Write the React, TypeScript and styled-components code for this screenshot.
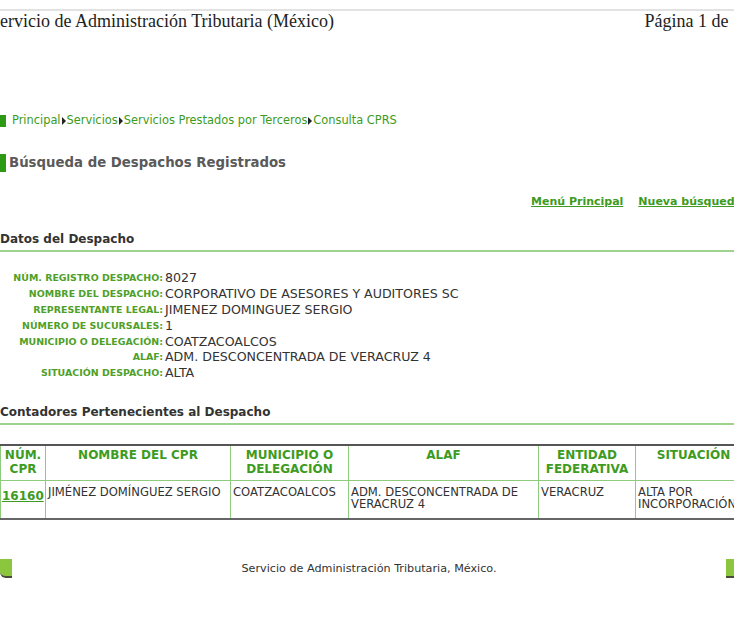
import React from "react";
import styled, { createGlobalStyle } from "styled-components";

const GlobalStyle = createGlobalStyle`
  html, body {
    margin: 0;
    padding: 0;
    background: #fff;
    overflow: hidden;
  }
  body {
    font-family: "DejaVu Sans", Verdana, sans-serif;
    color: #333;
  }
`;

const green = "#3d9b22";
const lightGreen = "#9dd38c";

const Page = styled.div`
  width: 752px;
  display: flex;
  flex-direction: column;
`;

const PrintHeader = styled.div`
  margin-top: 9px;
  border-top: 2px solid #e2e2e2;
  display: flex;
  justify-content: space-between;
  font-family: "Liberation Serif", "Times New Roman", serif;
  font-size: 18px;
  line-height: 21px;
  color: #222;
  margin-left: -10px;
  width: 752px;
`;

const Crumbs = styled.div`
  margin-top: 82px;
  display: flex;
  align-items: center;
  gap: 6px;
  font-size: 11.4px;
  line-height: 13px;
  color: ${green};
`;

const Marker = styled.span<{ $h: number }>`
  display: inline-block;
  flex: none;
  width: 6px;
  height: ${({ $h }) => $h}px;
  background: #2e9a14;
`;

const Arrow = styled.span`
  display: inline-block;
  width: 0;
  height: 0;
  border-top: 4px solid transparent;
  border-bottom: 4px solid transparent;
  border-left: 4px solid #222;
  margin: 0 1px;
`;

const CrumbText = styled.span`
  display: flex;
  align-items: center;
`;

const Title = styled.h1`
  margin: 27px 0 0;
  display: flex;
  align-items: center;
  gap: 3px;
  font-size: 13.3px;
  line-height: 18px;
  font-weight: bold;
  color: #5a5a5a;
`;

const Links = styled.div`
  margin: 23px 10px 0 0;
  display: flex;
  justify-content: flex-end;
  gap: 15px;
  font-size: 11px;
  line-height: 14px;
  font-weight: bold;
`;

const NavLink = styled.a`
  color: ${green};
  text-decoration: underline;
`;

const SectionTitle = styled.h2<{ $top: number }>`
  margin: ${({ $top }) => $top}px 0 0;
  font-size: 12px;
  line-height: 16px;
  font-weight: bold;
  color: #333;
  padding-bottom: 3px;
  border-bottom: 2px solid ${lightGreen};
`;

const Fields = styled.dl`
  margin: 18px 0 0;
  display: grid;
  grid-template-columns: 163px 1fr;
  grid-auto-rows: 15.8px;
  align-items: center;
`;

const Label = styled.dt`
  text-align: right;
  font-size: 9.45px;
  font-weight: bold;
  color: #4f9f2a;
  white-space: nowrap;
`;

const Value = styled.dd`
  margin: 0 0 0 2px;
  font-size: 12.6px;
  color: #333;
  white-space: nowrap;
`;

const Table = styled.table`
  margin-top: 19px;
  border-collapse: collapse;
  width: 752px;
  table-layout: fixed;
  border-top: 2px solid #555;
  border-bottom: 2px solid #666;
`;

const HeadRow = styled.tr`
  height: 36px;
`;

const BodyRow = styled.tr`
  height: 38px;
`;

const Th = styled.th`
  border: 1px solid #8fcb7c;
  border-top: none;
  font-size: 12px;
  font-weight: bold;
  color: ${green};
  line-height: 14px;
  vertical-align: top;
  padding: 2px 1px 0;
  text-align: center;
`;

const Td = styled.td`
  border: 1px solid #8fcb7c;
  border-bottom: none;
  font-size: 11.6px;
  line-height: 12px;
  color: #333;
  vertical-align: top;
  padding: 5px 2px 0;
  text-align: left;
  white-space: normal;
`;

const CprLink = styled.a`
  display: block;
  font-size: 12px;
  font-weight: bold;
  color: ${green};
  text-decoration: underline;
  padding-top: 4px;
  margin-left: -1px;
`;

const Footer = styled.div`
  margin-top: 40px;
  display: flex;
  align-items: center;
  justify-content: space-between;
  width: 734px;
  height: 18px;
`;

const Corner = styled.span<{ $side: "left" | "right" }>`
  width: ${({ $side }) => ($side === "left" ? 12 : 8)}px;
  height: 17px;
  background: #8cc63f;
  border-bottom: 2px solid #4a4a3a;
  border-bottom-left-radius: ${({ $side }) => ($side === "left" ? 6 : 0)}px;
`;

const FooterText = styled.span`
  font-size: 11.2px;
  color: #333;
`;

const fields: [string, string][] = [
  ["NÚM. REGISTRO DESPACHO:", "8027"],
  ["NOMBRE DEL DESPACHO:", "CORPORATIVO DE ASESORES Y AUDITORES SC"],
  ["REPRESENTANTE LEGAL:", "JIMENEZ DOMINGUEZ SERGIO"],
  ["NÚMERO DE SUCURSALES:", "1"],
  ["MUNICIPIO O DELEGACIÓN:", "COATZACOALCOS"],
  ["ALAF:", "ADM. DESCONCENTRADA DE VERACRUZ 4"],
  ["SITUACIÓN DESPACHO:", "ALTA"],
];

const crumbs = ["Principal", "Servicios", "Servicios Prestados por Terceros", "Consulta CPRS"];

export default function App() {
  return (
    <>
      <GlobalStyle />
      <Page>
        <PrintHeader>
          <span>Servicio de Administración Tributaria (México)</span>
          <span>Página 1 de 1</span>
        </PrintHeader>

        <Crumbs>
          <Marker $h={12} />
          <CrumbText>
            {crumbs.map((c, i) => (
              <React.Fragment key={c}>
                {i > 0 && <Arrow />}
                {c}
              </React.Fragment>
            ))}
          </CrumbText>
        </Crumbs>

        <Title>
          <Marker $h={18} />
          Búsqueda de Despachos Registrados
        </Title>

        <Links>
          <NavLink href="#">Menú Principal</NavLink>
          <NavLink href="#">Nueva búsqueda</NavLink>
        </Links>

        <SectionTitle $top={22}>Datos del Despacho</SectionTitle>
        <Fields>
          {fields.map(([l, v]) => (
            <React.Fragment key={l}>
              <Label>{l}</Label>
              <Value>{v}</Value>
            </React.Fragment>
          ))}
        </Fields>

        <SectionTitle $top={23}>Contadores Pertenecientes al Despacho</SectionTitle>
        <Table>
          <colgroup>
            <col style={{ width: 45 }} />
            <col style={{ width: 185 }} />
            <col style={{ width: 118 }} />
            <col style={{ width: 190 }} />
            <col style={{ width: 97 }} />
            <col />
          </colgroup>
          <thead>
            <HeadRow>
              <Th>NÚM. CPR</Th>
              <Th>NOMBRE DEL CPR</Th>
              <Th>MUNICIPIO O DELEGACIÓN</Th>
              <Th>ALAF</Th>
              <Th>ENTIDAD FEDERATIVA</Th>
              <Th>SITUACIÓN</Th>
            </HeadRow>
          </thead>
          <tbody>
            <BodyRow>
              <Td>
                <CprLink href="#">16160</CprLink>
              </Td>
              <Td>JIMÉNEZ DOMÍNGUEZ SERGIO</Td>
              <Td>COATZACOALCOS</Td>
              <Td>ADM. DESCONCENTRADA DE VERACRUZ 4</Td>
              <Td>VERACRUZ</Td>
              <Td>ALTA POR INCORPORACIÓN</Td>
            </BodyRow>
          </tbody>
        </Table>

        <Footer>
          <Corner $side="left" />
          <FooterText>Servicio de Administración Tributaria, México.</FooterText>
          <Corner $side="right" />
        </Footer>
      </Page>
    </>
  );
}
